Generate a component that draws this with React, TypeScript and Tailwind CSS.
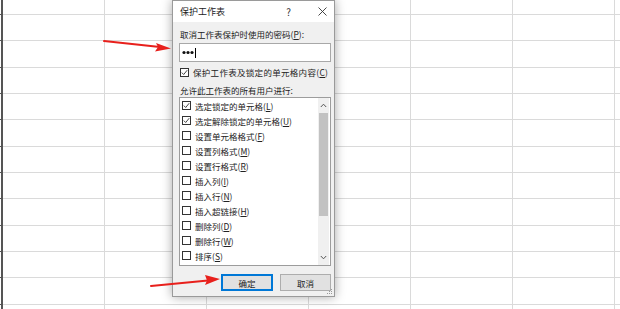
import React from "react";

const rowHeights = [
  "h-[15px]", "h-[26px]", "h-[27px]", "h-[26px]", "h-[26px]", "h-[27px]",
  "h-[26px]", "h-[26px]", "h-[27px]", "h-[26px]", "h-[26px]", "h-[27px]", "h-[20px]",
];

const options = [
  { key: "L", label: "选定锁定的单元格", checked: true },
  { key: "U", label: "选定解除锁定的单元格", checked: true },
  { key: "F", label: "设置单元格格式", checked: false },
  { key: "M", label: "设置列格式", checked: false },
  { key: "R", label: "设置行格式", checked: false },
  { key: "I", label: "插入列", checked: false },
  { key: "N", label: "插入行", checked: false },
  { key: "H", label: "插入超链接", checked: false },
  { key: "D", label: "删除列", checked: false },
  { key: "W", label: "删除行", checked: false },
  { key: "S", label: "排序", checked: false },
];

const Check = ({ checked }: { checked: boolean }) => (
  <span className="w-[9px] h-[9px] border border-[#333] bg-white flex items-center justify-center shrink-0">
    {checked && (
      <svg width="7" height="7" viewBox="0 0 7 7">
        <path d="M0.8 3.6 L2.7 5.5 L6.2 1.2" fill="none" stroke="#333" strokeWidth="0.9" />
      </svg>
    )}
  </span>
);

const Sheet = () => (
  <div className="flex flex-col">
    {rowHeights.map((h, i) => (
      <div key={i} className={`flex ${h}`}>
        <div className="w-[3px] shrink-0 border-r-2 border-b border-[#555]" />
        {[0, 1, 2, 3, 4, 5, 6].map((c) => (
          <div key={c} className="w-[102px] shrink-0 border-r border-b border-[#dadada]" />
        ))}
      </div>
    ))}
  </div>
);

const Dialog = () => (
  <div className="absolute left-[172px] top-0 w-[163px] h-[297px] border border-[#9a9a9a] bg-[#f0f0f0] shadow-[0_0_10px_rgba(0,0,0,0.35)] flex flex-col text-[8.5px] leading-[12px] text-[#222] whitespace-nowrap">
    <div className="h-[21px] bg-white flex items-center pl-[7px] pr-[7px] text-[9px]">
      <span>保护工作表</span>
      <span className="ml-auto mr-[27px] text-[10px] text-[#333]">?</span>
      <svg width="9" height="9" viewBox="0 0 9 9">
        <path d="M0.5 0.5 L8.5 8.5 M8.5 0.5 L0.5 8.5" stroke="#333" strokeWidth="0.9" />
      </svg>
    </div>
    <div className="flex flex-col pl-[6px] pr-[3px]">
      <div className="mt-[6px] pl-[1px]">
        取消工作表保护时使用的密码(<u>P</u>):
      </div>
      <div className="mt-[3px] h-[19px] border border-[#a8a8a8] bg-white flex items-center pl-[2px]">
        <svg width="12" height="5" viewBox="0 0 12 5">
          <circle cx="2" cy="2.5" r="1.6" fill="#111" />
          <circle cx="6" cy="2.5" r="1.6" fill="#111" />
          <circle cx="10" cy="2.5" r="1.6" fill="#111" />
        </svg>
        <span className="ml-[1px] w-px h-[10px] bg-black" />
      </div>
      <div className="mt-[4px] h-[12px] flex items-center pl-[1px] gap-[4px]">
        <Check checked />
        <span className="tracking-[0.3px]">保护工作表及锁定的单元格内容(<u>C</u>)</span>
      </div>
      <div className="mt-[6px] pl-[1px]">允许此工作表的所有用户进行:</div>
      <div className="mt-[1px] h-[169px] border border-[#9c9c9c] bg-white flex">
        <div className="flex-1 flex flex-col pl-[2px]">
          {options.map((o) => (
            <div key={o.key} className="h-[15px] flex items-center gap-[4px]">
              <Check checked={o.checked} />
              <span>
                {o.label}(<u>{o.key}</u>)
              </span>
            </div>
          ))}
        </div>
        <div className="w-[11px] mr-[1px] bg-[#f0f0f0] flex flex-col items-center">
          <div className="h-[15px] flex items-center">
            <svg width="7" height="5" viewBox="0 0 7 5">
              <path d="M0.8 4 L3.5 1.2 L6.2 4" fill="none" stroke="#555" strokeWidth="1" />
            </svg>
          </div>
          <div className="w-[9px] h-[103px] bg-[#c2c2c2]" />
          <div className="flex-1" />
          <div className="h-[15px] flex items-center">
            <svg width="7" height="5" viewBox="0 0 7 5">
              <path d="M0.8 1 L3.5 3.8 L6.2 1" fill="none" stroke="#555" strokeWidth="1" />
            </svg>
          </div>
        </div>
      </div>
      <div className="mt-[8px] flex justify-end gap-[7px]">
        <button className="w-[52px] h-[17px] border border-[#0078d7] bg-[#e1e1e1] text-[8.5px] leading-[12px] shadow-[inset_0_0_0_1px_#0078d7]">
          确定
        </button>
        <button className="w-[51px] h-[17px] border border-[#adadad] bg-[#e1e1e1] text-[8.5px] leading-[12px]">
          取消
        </button>
      </div>
    </div>
    <svg className="absolute right-[1px] bottom-[1px]" width="6" height="6" viewBox="0 0 6 6">
      <rect x="4" y="0" width="1" height="1" fill="#999" />
      <rect x="2" y="2" width="1" height="1" fill="#999" />
      <rect x="4" y="2" width="1" height="1" fill="#999" />
      <rect x="0" y="4" width="1" height="1" fill="#999" />
      <rect x="2" y="4" width="1" height="1" fill="#999" />
      <rect x="4" y="4" width="1" height="1" fill="#999" />
    </svg>
  </div>
);

const Arrows = () => (
  <svg className="absolute inset-0 pointer-events-none" width="620" height="309" viewBox="0 0 620 309">
    <path d="M104 41 L160 47" stroke="#e8201c" strokeWidth="2" strokeLinecap="round" />
    <polygon points="171,48.5 156,43 158,47 155,51.5" fill="#e8201c" />
    <path d="M151 286 L208 280.5" stroke="#e8201c" strokeWidth="2" strokeLinecap="round" />
    <polygon points="220,279 205,275 207,280.5 205,285" fill="#e8201c" />
  </svg>
);

const App = () => {
  return (
    <div
      className="relative w-[620px] h-[309px] overflow-hidden bg-white"
      style={{ fontFamily: '"Noto Sans CJK SC", "Liberation Sans", sans-serif' }}
    >
      <Sheet />
      <Dialog />
      <Arrows />
    </div>
  );
};

export default App;
